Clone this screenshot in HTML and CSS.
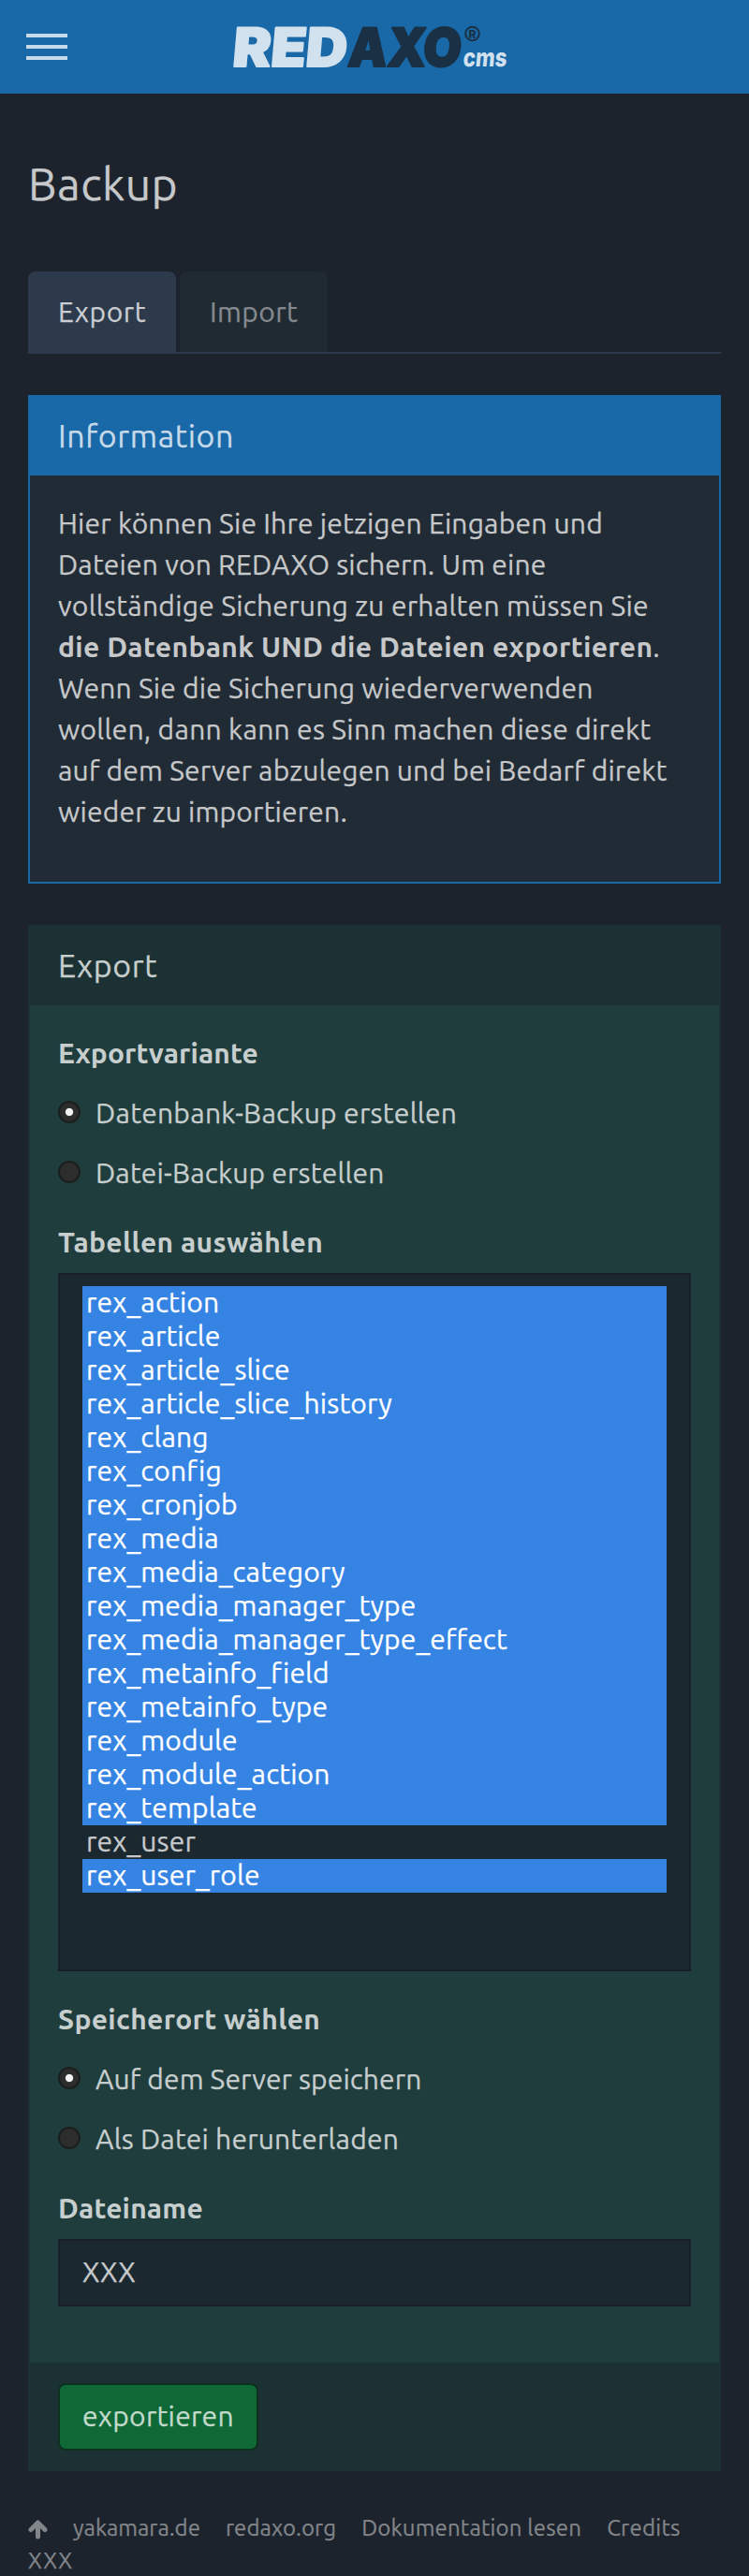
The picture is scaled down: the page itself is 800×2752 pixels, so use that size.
FILE: index.html
```
<!DOCTYPE html>
<html lang="de">
<head>
<meta charset="utf-8">
<title>Backup · REDAXO</title>
<link rel="stylesheet" href="styles.css">
</head>
<body>
<header class="topbar">
  <button class="burger" type="button" aria-label="Navigation"><span></span><span></span><span></span></button>
  <svg class="logo" width="316" height="92" viewBox="238 4 316 92" role="img" aria-label="REDAXO cms">
    <g transform="translate(0 70.5) skewX(-5)">
      <text class="logo-word logo-light" x="247.5" y="0" textLength="122" lengthAdjust="spacingAndGlyphs">RED</text>
      <text class="logo-word logo-dark" x="370.5" y="0" textLength="121" lengthAdjust="spacingAndGlyphs">AXO</text>
      <text class="logo-cms logo-light" x="494" y="0.5" textLength="47" lengthAdjust="spacingAndGlyphs">cms</text>
    </g>
    <circle class="logo-ring" cx="504.5" cy="36" r="7.3"/>
    <text class="logo-reg logo-dark" x="500.4" y="40.5">R</text>
  </svg>
</header>
<main class="page">
  <h1 class="title">Backup</h1>
  <nav class="tabs">
    <a class="tab tab-active">Export</a>
    <a class="tab">Import</a>
  </nav>

  <section class="panel panel-info">
    <h2 class="panel-head">Information</h2>
    <p class="panel-text">
      <span class="sp-2">Hier können Sie Ihre jetzigen Eingaben und</span><br>
      <span class="sp-2">Dateien von REDAXO sichern. Um eine</span><br>
      <span class="sp-3">vollständige Sicherung zu erhalten müssen Sie</span><br>
      <strong class="sp-4">die Datenbank UND die Dateien exportieren</strong>.<br>
      <span class="sp-2">Wenn Sie die Sicherung wiederverwenden</span><br>
      <span class="sp-3">wollen, dann kann es Sinn machen diese direkt</span><br>
      <span class="sp-2">auf dem Server abzulegen und bei Bedarf direkt</span><br>
      <span class="sp-2">wieder zu importieren.</span>
    </p>
  </section>

  <section class="panel panel-edit">
    <h2 class="panel-head">Export</h2>
    <div class="panel-form">
      <div class="label sp-1">Exportvariante</div>
      <label class="choice sp-3"><span class="radio radio-on"></span>Datenbank-Backup erstellen</label>
      <label class="choice sp-2"><span class="radio"></span>Datei-Backup erstellen</label>

      <div class="label label-next sp-4">Tabellen auswählen</div>
      <ul class="listbox">
        <li class="on">rex_action</li>
        <li class="on">rex_article</li>
        <li class="on">rex_article_slice</li>
        <li class="on">rex_article_slice_history</li>
        <li class="on">rex_clang</li>
        <li class="on">rex_config</li>
        <li class="on">rex_cronjob</li>
        <li class="on">rex_media</li>
        <li class="on">rex_media_category</li>
        <li class="on">rex_media_manager_type</li>
        <li class="on">rex_media_manager_type_effect</li>
        <li class="on">rex_metainfo_field</li>
        <li class="on">rex_metainfo_type</li>
        <li class="on">rex_module</li>
        <li class="on">rex_module_action</li>
        <li class="on">rex_template</li>
        <li>rex_user</li>
        <li class="on">rex_user_role</li>
      </ul>

      <div class="label label-list sp-4">Speicherort wählen</div>
      <label class="choice sp-1"><span class="radio radio-on"></span>Auf dem Server speichern</label>
      <label class="choice sp-2"><span class="radio"></span>Als Datei herunterladen</label>

      <div class="label label-next sp-2">Dateiname</div>
      <div class="field">XXX</div>
    </div>
    <div class="panel-foot"><button class="btn sp-3" type="button">exportieren</button></div>
  </section>

  <footer class="footer">
    <div class="links">
      <svg class="arrow" width="21" height="21" viewBox="0 0 21 21"><path d="M10.5 18V4M3 10.5L10.5 3L18 10.5" fill="none" stroke="currentColor" stroke-width="5" stroke-linecap="round" stroke-linejoin="round"/></svg>
      <a>yakamara.de</a><a class="sp-1">redaxo.org</a><a class="sp-2">Dokumentation lesen</a><a class="sp-3">Credits</a>
    </div>
    <div class="stamp">XXX</div>
  </footer>
</main>
</body>
</html>
```
FILE: styles.css
```
* { box-sizing: border-box; }

body {
  margin: 0;
  min-height: 2752px;
  background: #1c232c;
  color: #c6c8ca;
  font: 30px/44px Ubuntu, "Noto Sans", sans-serif;
}

.sp-1 { letter-spacing: 0.1px; }
.sp-2 { letter-spacing: 0.18px; }
.sp-3 { letter-spacing: 0.27px; }
.sp-4 { letter-spacing: 0.36px; }

/* Top bar */
.topbar {
  display: flex;
  align-items: center;
  height: 100px;
  padding-left: 28px;
  background: #1968a7;
}
.burger {
  display: flex;
  flex-direction: column;
  gap: 8px;
  width: 44px;
  padding: 0;
  border: 0;
  background: none;
}
.burger span { height: 4px; background: #c6dae9; }
.logo { margin-left: 166px; overflow: visible; }
.logo-light { fill: #d1e1ee; stroke: #d1e1ee; }
.logo-dark { fill: #1a3145; stroke: #1a3145; }
.logo-word {
  font: 900 57px Inter, sans-serif;
  stroke-width: 2px;
  stroke-linejoin: round;
}
.logo-cms { font: 800 27px Inter, sans-serif; stroke-width: 0; }
.logo-reg { font: 800 12px Inter, sans-serif; stroke-width: 0; }
.logo-ring { fill: none; stroke: #1a3145; stroke-width: 2; }

.page { padding: 0 30px; -webkit-text-stroke: 0.25px; }
.title {
  margin: 0;
  padding: 69px 0 67px;
  font-size: 48px;
  font-weight: 400;
  line-height: 54px;
  letter-spacing: 0.5px;
}

/* Tabs */
.tabs {
  display: flex;
  gap: 4px;
  margin-bottom: 44px;
  background: linear-gradient(#2d3a4b, #2d3a4b) bottom / 100% 2px no-repeat;
}
.tab {
  width: 158px;
  height: 86px;
  padding: 21px 0 0 32px;
  border-radius: 8px 8px 0 0;
  background: #202a33;
  color: #85898e;
  letter-spacing: 0.4px;
}
.tab-active {
  height: 88px;
  background: #2d3a4b;
  color: #cacdd1;
  letter-spacing: 0.6px;
}

/* Panels */
.panel { border: 2px solid; }
.panel-head {
  height: 84px;
  margin: 0;
  padding: 21px 30px 0;
  font-size: 34px;
  font-weight: 400;
  line-height: 40px;
  letter-spacing: 0.58px;
}
.panel-info {
  margin-bottom: 44px;
  border-color: #1968a7;
  background: #212b35;
}
.panel-info .panel-head { background: #1968a7; color: #c6dae9; }
.panel-text { margin: 0; padding: 29px 30px 53px; white-space: nowrap; }
.panel-text strong, .label { -webkit-text-stroke: 0; }

.panel-edit {
  border-color: #1b3133;
  background: #203d3d;
  color: #c7cece;
}
.panel-edit .panel-head { background: #1b3133; }
.panel-form { padding: 29px 30px 60px; }

.label { font-weight: 700; }
.label-next { margin-top: 30px; }
.label-list { margin-top: 29px; }
.choice {
  display: flex;
  gap: 16px;
  margin-top: 20px;
}
.radio {
  width: 24px;
  height: 24px;
  margin-top: 9px;
  border: 2px solid #1c1e1e;
  border-radius: 50%;
  background: #2d2d2d;
}
.radio-on { background: radial-gradient(circle, #f3f3f3 3.7px, #2d2d2d 4.6px); }

.listbox {
  height: 746px;
  margin: 11px 0 0;
  padding: 12px 24px;
  border: 2px solid #171e27;
  background: #1c2830;
  color: #c6c9cb;
  letter-spacing: 0.14px;
  list-style: none;
}
.listbox li {
  height: 36px;
  padding-left: 4px;
  line-height: 34px;
}
.listbox .on { background: #3584e4; color: #fff; }

.field {
  height: 72px;
  margin-top: 11px;
  padding: 11px 24px;
  border: 2px solid #171e27;
  background: #1c2830;
  color: #c6c9cb;
}

.panel-foot { height: 114px; padding: 22px 30px 0; background: #1b3133; }
.btn {
  display: block;
  width: 214px;
  height: 72px;
  padding: 0 0 2px 24px;
  border: 2px solid #0c321f;
  border-radius: 8px;
  background: #0f6937;
  color: #c3dacd;
  font: inherit;
  text-align: left;
}

/* Footer */
.footer {
  padding-top: 44px;
  color: #828589;
  font-size: 24px;
  line-height: 34px;
}
.links { display: flex; gap: 27px; white-space: nowrap; }
.arrow { margin-top: 8px; }
.stamp { padding-top: 1px; letter-spacing: 0.9px; line-height: 33px; }
```
